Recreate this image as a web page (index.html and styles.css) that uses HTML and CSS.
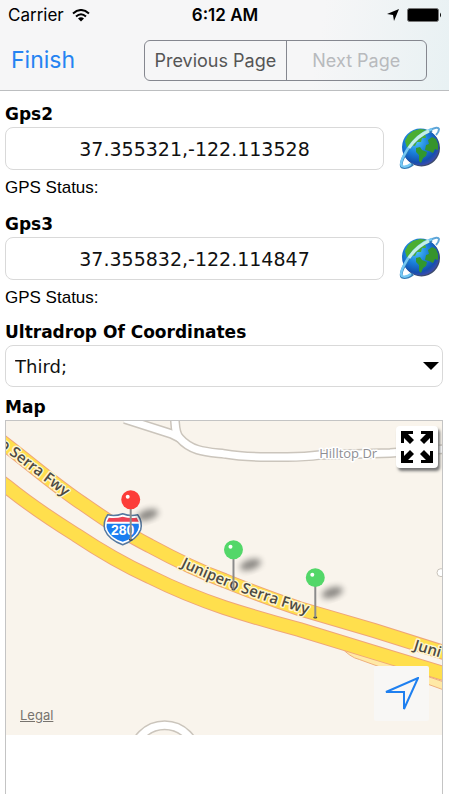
FILE: index.html
```html
<!DOCTYPE html>
<html lang="en">
<head>
  <title>Coordinates form</title>
  <meta charset="utf-8">
  <meta name="viewport" content="width=device-width, initial-scale=1.0">
  <link rel="stylesheet" href="styles.css">
</head>
<body>
  <!-- shared globe icon -->
  <svg class="defs" width="0" height="0" aria-hidden="true">
    <defs>
      <radialGradient id="sea" cx="0.4" cy="0.35" r="0.7">
        <stop offset="0" stop-color="#4cc0f8"/>
        <stop offset="0.45" stop-color="#1a80dc"/>
        <stop offset="0.8" stop-color="#1450ae"/>
        <stop offset="1" stop-color="#4a4aa8"/>
      </radialGradient>
      <symbol id="globe" viewBox="0 0 42 44">
        <path d="M31 4Q39 0 40 3Q40 6 37 9" fill="none" stroke="#5fa5d8" stroke-width="2"/>
        <circle cx="22.500" cy="22" r="18.500" fill="#3c4c6c"/>
        <circle cx="21.500" cy="21" r="18.500" fill="url(#sea)"/>
        <path d="M6 15L9 9L14 5L21 3L28 4L29 8L26 8L27 12L23 12L22 16L18 16L16 20L12 19L8 22Z" fill="#4aae32"/>
        <path d="M17 22L21 21L23 24L28 26L27 30L24 32L22 37L20 35L20 29L17 26Z" fill="#31982f"/>
        <path d="M29 14L33 11L37 13L39 18L39 24L36 23L34 27L30 25L26 24L27 19L30 18Z" fill="#36942d"/>
        <path d="M33 4Q18 9 8 25Q0 38 3 41Q7 43 14 38" fill="none" stroke="#347cb4" stroke-width="3"/>
        <path d="M33 3Q18 8 8 24Q0 37 3 40Q7 42 12 38" fill="none" stroke="#74c8f4" stroke-width="2.500"/>
        <path d="M30 5Q18 10 10 22" fill="none" stroke="#c5efe6" stroke-width="3"/>
      </symbol>
    </defs>
  </svg>

  <header class="topbar">
    <div class="status">
      <div class="carrier">
        <span>Carrier</span>
        <svg width="18" height="13" viewBox="0 0 18 13" aria-hidden="true">
          <path d="M1 4.500Q9-2.500 17 4.500M4 7.500Q9 3 14 7.500" fill="none" stroke="#000" stroke-width="2"/>
          <path d="M6 9.500Q9 7 12 9.500L9 12.500Z"/>
        </svg>
      </div>
      <strong class="clock">6:12 AM</strong>
      <div class="power">
        <svg width="12" height="12" viewBox="0 0 12 12" aria-hidden="true"><path d="M12 0L7 12L6 6L0 5Z"/></svg>
        <svg width="35" height="14" viewBox="0 0 35 14" aria-hidden="true">
          <rect x="0.500" y="0.500" width="31" height="13" rx="2" fill="#000" stroke="#777"/>
          <path d="M33 4.500Q35 7 33 9.500Z"/>
        </svg>
      </div>
    </div>
    <nav class="toolbar">
      <button class="finish" type="button">Finish</button>
      <div class="segments">
        <button type="button">Previous Page</button>
        <button type="button" disabled>Next Page</button>
      </div>
    </nav>
  </header>

  <main class="form">
    <div class="field gps-field">
      <label for="gps2">Gps2</label>
      <div class="gps-row">
        <input id="gps2" type="text" value="37.355321,-122.113528">
        <button class="locate" type="button" aria-label="Get Gps2 position"><svg><use href="#globe"/></svg></button>
      </div>
      <p>GPS Status:</p>
    </div>

    <div class="field gps-field">
      <label for="gps3">Gps3</label>
      <div class="gps-row">
        <input id="gps3" type="text" value="37.355832,-122.114847">
        <button class="locate" type="button" aria-label="Get Gps3 position"><svg><use href="#globe"/></svg></button>
      </div>
      <p>GPS Status:</p>
    </div>

    <div class="field">
      <label for="drop">Ultradrop Of Coordinates</label>
      <div class="select-wrapper">
        <select id="drop">
          <option>Third;</option>
        </select>
        <svg class="caret" width="16" height="8" viewBox="0 0 16 8" aria-hidden="true"><path d="M0 0H16L8 8Z"/></svg>
      </div>
    </div>

    <section class="map-field">
      <h2>Map</h2>
      <div class="map-frame">
        <div class="map">
          <svg class="map-canvas" viewBox="0 0 437 315" preserveAspectRatio="xMidYMid slice" role="img" aria-label="Map of Junipero Serra Fwy">
            <defs>
              <path id="side" d="M119-2L166 13L174 17"/>
              <path id="hilltop" d="M169-4C170 4 169 12 174 17C186 31 202 31 219 33Q236 36 262 36H282Q300 36 315 34L385 32L440 28"/>
              <path id="north" d="M-8 18L0 24C26 44 50 65 77 83C100 99 120 113 144 125C168 138 192 150 219 160Q256 175 294 188L369 210L445 234"/>
              <path id="south" d="M-8 59L0 65C22 83 46 99 70 114C94 130 118 144 144 156C168 168 192 178 219 187Q256 199 294 209L369 232L445 255"/>
              <path id="label-west" d="M-28 9L4 34L59 76"/>
              <path id="label-mid" d="M175 146Q202 159 234 171Q268 184 320 199"/>
              <path id="label-east" d="M408 229L560 275"/>
              <filter id="soft" x="-50%" y="-50%" width="200%" height="200%"><feGaussianBlur stdDeviation="3"/></filter>
              <g id="pin">
                <ellipse cx="17" cy="15" rx="11" ry="5" transform="rotate(-18 17 15)" fill="#000" opacity="0.450" filter="url(#soft)"/>
                <ellipse cx="0" cy="40" rx="2" ry="1" fill="#333"/>
                <path d="M0 8V40" stroke="#8b8b8b" stroke-width="2"/>
                <circle r="9.500"/>
                <circle cx="-3" cy="-3" r="2" fill="#fff"/>
              </g>
            </defs>
            <rect width="437" height="315" fill="#f9f4ec"/>

            <g class="road-edge street"><use href="#side"/><use href="#hilltop"/><circle cx="159" cy="337" r="32"/></g>
            <g class="road-fill street"><use href="#side"/><use href="#hilltop"/><circle cx="159" cy="337" r="32"/></g>
            <circle cx="436" cy="152" r="4" fill="#fff" stroke="#c9c3ba"/>

            <path d="M335 226Q345 237 354 239L440 270V262L340 228" fill="#ffe9a6" stroke="#eeb07c"/>
            <g class="road-edge freeway"><use href="#north"/><use href="#south"/></g>
            <g class="road-fill freeway"><use href="#north"/><use href="#south"/></g>

            <text class="street-name" x="314" y="37">Hilltop Dr</text>
            <text class="freeway-name" text-anchor="end"><textPath href="#label-west" startOffset="100%">o Serra Fwy</textPath></text>
            <text class="freeway-name"><textPath href="#label-mid">Junipero Serra Fwy</textPath></text>
            <text class="freeway-name"><textPath href="#label-east">Juni</textPath></text>

            <!-- interstate shield -->
            <g transform="translate(98 93)">
              <path d="M4 1Q11 3 19 0Q27 3 34 1Q39 8 37 16Q33 26 19 31Q5 26 1 16Q-1 8 4 1Z" fill="#fff" stroke="#55789f" stroke-width="1.500"/>
              <path d="M5 4Q12 5 19 3Q26 5 33 4L35 8H3Z" fill="#ed4355"/>
              <path d="M3 10H35Q36 14 34 17Q30 25 19 28Q8 25 4 17Q2 14 3 10Z" fill="#1b7df0"/>
              <text class="shield" x="19" y="21">280</text>
            </g>

            <use href="#pin" x="125" y="79" fill="#fc3d39"/>
            <use href="#pin" x="228" y="129" fill="#53d769"/>
            <use href="#pin" x="310" y="157" fill="#53d769"/>
          </svg>
          <button class="expand" type="button" aria-label="Full screen">
            <svg width="32" height="32" viewBox="0 0 32 32">
              <g id="arrow"><path d="M0 0H12V3H7L13 9L9 13L3 7V12H0Z"/></g>
              <use href="#arrow" transform="translate(32 0) scale(-1 1)"/>
              <use href="#arrow" transform="translate(0 32) scale(1 -1)"/>
              <use href="#arrow" transform="translate(32 32) scale(-1 -1)"/>
            </svg>
          </button>
          <button class="track" type="button" aria-label="Show my location">
            <svg width="34" height="34" viewBox="0 0 34 34"><path d="M33 1L19 32V15L1 15Z" fill="none" stroke="#1f80f0" stroke-width="2"/></svg>
          </button>
          <a class="legal" href="#legal">Legal</a>
        </div>
      </div>
    </section>
  </main>
</body>
</html>
```
FILE: styles.css
```css
* {box-sizing: border-box; margin: 0; padding: 0;}
body {display: flex; flex-direction: column; min-height: 100vh; background: #fff; color: #000; font-family: "DejaVu Sans", Verdana, sans-serif; font-size: 17px;}
button {border: 0; background: none; font-family: inherit;}
svg {display: block;}
.defs {position: absolute;}

.topbar {font-family: Inter, sans-serif; background: linear-gradient(100deg, #f6f6f7 70%, #e8f1f3); border-bottom: 1px solid #bcbec0;}
.status {display: grid; grid-template-columns: 1fr auto 1fr; align-items: center; height: 30px; padding: 0 7px 0 8px;}
.carrier, .power {display: flex; align-items: center; gap: 8px;}
.carrier, .clock {font-size: 17px; line-height: 20px;}
.clock {font-weight: 600;}
.power {justify-content: flex-end;}
.toolbar {display: flex; align-items: center; justify-content: space-between; height: 60px; padding: 0 22px 0 11px;}
.finish {color: #2583f2; font-size: 23px; line-height: 30px;}
.segments {display: grid; grid-template-columns: 1fr 1fr; width: 68%; max-width: 320px; height: 41px; border: 1px solid #85878f; border-radius: 6px;}
.segments button {color: #555; font-size: 18px; white-space: nowrap;}
.segments button + button {border-left: 1px solid #85878f;}
.segments button:disabled {color: #b8babd;}

.form {display: flex; flex-direction: column; flex: 1; padding: 11px 6px 0 5px;}
.field {margin-bottom: 10px;}
.gps-field {padding-top: 2px; margin-bottom: 13px;}
label, h2 {display: block; margin-bottom: 3px; font-size: 17px; font-weight: bold; line-height: 20px;}
.gps-row {display: flex; align-items: center; gap: 15px; height: 43px; padding-right: 2px;}
input, select {width: 100%; min-width: 0; height: 43px; border: 1px solid #d9d9d9; border-radius: 8px; background: #fff; color: #111; font-family: inherit; font-size: 19px;}
input {flex: 1; padding: 0 8px; text-align: center;}
.locate {flex: none; padding-bottom: 2px;}
.locate svg {width: 42px; height: 44px;}
.gps-field p {margin-top: 7px; font-family: "Liberation Sans", Arial, sans-serif; font-size: 17px; line-height: 22px;}
.select-wrapper {position: relative;}
select {display: block; height: 42px; padding: 0 32px 0 9px; font-size: 18px; appearance: none;}
.caret {position: absolute; right: 4px; top: 17px; pointer-events: none;}

.map-field {display: flex; flex-direction: column; flex: 1;}
.map-frame {flex: 1; border: 1px solid #c4c4c4; border-bottom: 0;}
.map {position: relative; overflow: hidden;}
.map-canvas {width: 100%; height: auto;}
.road-edge, .road-fill {fill: none;}
.road-edge.street {stroke: #cbc5bc; stroke-width: 10px;}
.road-fill.street {stroke: #fff; stroke-width: 7px;}
.road-edge.freeway {stroke: #efa579; stroke-width: 15px;}
.road-fill.freeway {stroke: #ffdf4d; stroke-width: 13px;}
.street-name, .freeway-name {font-family: "Open Sans", sans-serif; paint-order: stroke; stroke-linejoin: round;}
.street-name {font-size: 13px; fill: #8e8e93; stroke: #fff; stroke-width: 3px;}
.freeway-name {font-size: 15px; font-weight: 600; fill: #4c4a43; stroke: #fff5cf; stroke-width: 3px;}
.shield {font-family: "Liberation Sans", Arial, sans-serif; font-size: 14px; font-weight: bold; text-anchor: middle; fill: #fff;}
.expand {position: absolute; top: 5px; right: 4px; display: grid; place-items: center; width: 42px; height: 42px; border-radius: 4px; background: #fff; box-shadow: 2px 3px 3px #777;}
.track {position: absolute; right: 13px; bottom: 14px; display: grid; place-items: center; width: 55px; height: 55px; border-radius: 2px; background: #f8f7f5;}
.legal {position: absolute; left: 14px; bottom: 10px; color: #77736e; font-family: Inter, sans-serif; font-size: 13px; line-height: 20px;}
```
